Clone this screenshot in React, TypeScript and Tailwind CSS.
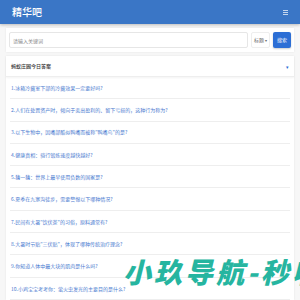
import { useState } from "react";

const questions = [
  "冰箱冷藏室下部的冷藏效果一定要好吗?",
  "人们在处置资产时，倾向于卖出盈利的、留下亏损的，这种行为称为?",
  "以下生物中，因嘴部酷似鸭嘴而被称\"鸭嘴鸟\"的是?",
  "健康真相：骑行锻炼速度越快越好?",
  "猜一猜：世界上最早使用负数的国家是?",
  "夏季在九寨沟徒步，需要警惕以下哪种情况?",
  "民间有大暑\"饮伏茶\"的习俗，原料通常有?",
  "大暑时节贴\"三伏贴\"，体现了哪种传统治疗理念?",
  "你知道人体中最大块的肌肉是什么吗?",
  "小鸡宝宝考考你：萤火虫发光的主要目的是什么?",
];

export default function App() {
  const [q, setQ] = useState("");
  return (
    <div
      className="relative w-[300px] h-[300px] overflow-hidden bg-[#f7f7f7]"
      style={{ fontFamily: '"Noto Sans CJK SC", "Noto Sans", sans-serif' }}
    >
      <header className="h-[24px] bg-[#3a76c6] flex items-center justify-between pl-[12px] pr-[12px] shadow-[0_1px_3px_rgba(0,0,0,0.25)]">
        <h1 className="text-white text-[10px] font-medium leading-none">精华吧</h1>
        <div className="flex flex-col gap-[1px] opacity-70">
          <span className="block w-[5px] h-[1px] bg-white" />
          <span className="block w-[5px] h-[1px] bg-white" />
          <span className="block w-[5px] h-[1px] bg-white" />
        </div>
      </header>

      <main className="px-[6px] pt-[4px] flex flex-col gap-[4px]">
        <div className="bg-white h-[24px] flex items-center px-[3px] gap-[3px] shadow-[0_0_2px_rgba(0,0,0,0.08)]">
          <input
            value={q}
            onChange={(e) => setQ(e.target.value)}
            placeholder="请输入关键词"
            className="flex-1 h-[16px] border border-[#e6e6e6] rounded-[2px] px-[3px] text-[5px] text-[#555] placeholder:text-[#888] outline-none"
          />
          <div className="h-[16px] px-[2px] flex items-center gap-[1px] border border-[#eee] rounded-[2px] text-[5px] text-[#666]">
            标题<span className="text-[4px]">▾</span>
          </div>
          <button className="h-[16px] w-[18px] bg-[#2c6ed5] text-white text-[5px] rounded-[2px] shadow-[0_1px_2px_rgba(0,0,0,0.2)]">
            搜索
          </button>
        </div>

        <section className="bg-white shadow-[0_0_2px_rgba(0,0,0,0.08)]">
          <div className="h-[21px] flex items-center justify-between px-[5px] border-b border-[#eee] shadow-[0_1px_2px_rgba(0,0,0,0.05)]">
            <h2 className="text-[5px] text-[#333] font-medium">蚂蚁庄园今日答案</h2>
            <span className="text-[5px] text-[#2c6ed5] leading-none">▾</span>
          </div>
          <ul className="px-[4px]">
            {questions.map((t, i) => (
              <li
                key={i}
                className="h-[22.3px] flex items-center border-b border-[#eeeeee] text-[5px] text-[#4a7bd0] pl-[1px] whitespace-nowrap overflow-hidden"
              >
                {i + 1}.{t}
              </li>
            ))}
          </ul>
        </section>
      </main>

      <div className="absolute left-[123px] top-[257px] text-[28px] font-black italic text-[#26b5a0] whitespace-nowrap tracking-[3px] leading-none">
        小玖导航-秒收
      </div>
    </div>
  );
}
